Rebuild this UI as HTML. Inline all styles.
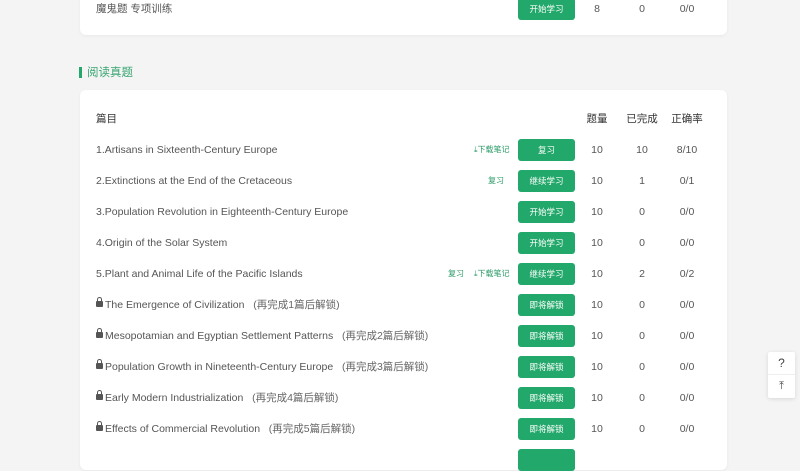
<!DOCTYPE html>
<html><head><meta charset="utf-8"><style>
*{margin:0;padding:0;box-sizing:border-box}
body{width:800px;height:450px;overflow:hidden;background:#f4f4f4;font-family:"Liberation Sans","Noto Sans CJK SC",sans-serif;color:#555;position:relative}
.card{position:absolute;left:80px;width:647px;background:#fff;border-radius:6px;box-shadow:0 1px 3px rgba(0,0,0,.05)}
.row{position:absolute;left:0;width:647px;height:22px;font-size:10.5px;line-height:22px}
.t{position:absolute;left:16px;color:#555}
.btn{position:absolute;left:438px;width:57px;height:22px;background:#22a86a;border-radius:3px;color:#fff;font-size:8.5px;text-align:center;line-height:22px}
.c{position:absolute;width:40px;text-align:center}
.c1{left:497px}.c2{left:542px}.c3{left:587px}
.lk{font-size:8px;color:#2a9a66;position:absolute}
.lock{display:inline-block;width:7px;height:6px;background:#555;border-radius:1px;position:relative;margin-right:2px;top:-1px}
.lock:before{content:"";position:absolute;left:1px;top:-4px;width:3px;height:4px;border:1px solid #555;border-bottom:none;border-radius:3px 3px 0 0}
.gray{color:#666}
</style></head><body>
<div class="card" style="top:-10px;height:45px">
 <div class="row" style="top:8px"><span class="t">魔鬼题 专项训练</span><span class="btn">开始学习</span><span class="c c1">8</span><span class="c c2">0</span><span class="c c3">0/0</span></div>
</div>
<div style="position:absolute;left:79px;top:67px;width:3px;height:11px;background:#22a86a"></div>
<div style="position:absolute;left:87px;top:64px;font-size:11.5px;color:#3aa673">阅读真题</div>
<div class="card" style="top:90px;height:380px">
 <div class="row" style="top:18px;color:#333"><span class="t" style="color:#333">篇目</span><span class="c c1">题量</span><span class="c c2">已完成</span><span class="c c3">正确率</span></div>
 <div class="row" style="top:49px"><span class="t">1.Artisans in Sixteenth-Century Europe</span><span class="lk" style="left:394px">⤓下载笔记</span><span class="btn">复习</span><span class="c c1">10</span><span class="c c2">10</span><span class="c c3">8/10</span></div>
 <div class="row" style="top:80px"><span class="t">2.Extinctions at the End of the Cretaceous</span><span class="lk" style="left:408px">复习</span><span class="btn">继续学习</span><span class="c c1">10</span><span class="c c2">1</span><span class="c c3">0/1</span></div>
 <div class="row" style="top:111px"><span class="t">3.Population Revolution in Eighteenth-Century Europe</span><span class="btn">开始学习</span><span class="c c1">10</span><span class="c c2">0</span><span class="c c3">0/0</span></div>
 <div class="row" style="top:142px"><span class="t">4.Origin of the Solar System</span><span class="btn">开始学习</span><span class="c c1">10</span><span class="c c2">0</span><span class="c c3">0/0</span></div>
 <div class="row" style="top:173px"><span class="t">5.Plant and Animal Life of the Pacific Islands</span><span class="lk" style="left:368px">复习</span><span class="lk" style="left:394px">⤓下载笔记</span><span class="btn">继续学习</span><span class="c c1">10</span><span class="c c2">2</span><span class="c c3">0/2</span></div>
 <div class="row" style="top:204px"><span class="t"><i class="lock"></i>The Emergence of Civilization &nbsp;&nbsp;<span class="gray">(再完成1篇后解锁)</span></span><span class="btn">即将解锁</span><span class="c c1">10</span><span class="c c2">0</span><span class="c c3">0/0</span></div>
 <div class="row" style="top:235px"><span class="t"><i class="lock"></i>Mesopotamian and Egyptian Settlement Patterns &nbsp;&nbsp;<span class="gray">(再完成2篇后解锁)</span></span><span class="btn">即将解锁</span><span class="c c1">10</span><span class="c c2">0</span><span class="c c3">0/0</span></div>
 <div class="row" style="top:266px"><span class="t"><i class="lock"></i>Population Growth in Nineteenth-Century Europe &nbsp;&nbsp;<span class="gray">(再完成3篇后解锁)</span></span><span class="btn">即将解锁</span><span class="c c1">10</span><span class="c c2">0</span><span class="c c3">0/0</span></div>
 <div class="row" style="top:297px"><span class="t"><i class="lock"></i>Early Modern Industrialization &nbsp;&nbsp;<span class="gray">(再完成4篇后解锁)</span></span><span class="btn">即将解锁</span><span class="c c1">10</span><span class="c c2">0</span><span class="c c3">0/0</span></div>
 <div class="row" style="top:328px"><span class="t"><i class="lock"></i>Effects of Commercial Revolution &nbsp;&nbsp;<span class="gray">(再完成5篇后解锁)</span></span><span class="btn">即将解锁</span><span class="c c1">10</span><span class="c c2">0</span><span class="c c3">0/0</span></div>
 <div class="row" style="top:359px"><span class="btn"></span></div>
</div>
<div style="position:absolute;left:768px;top:352px;width:27px;height:46px;background:#fff;box-shadow:0 1px 4px rgba(0,0,0,.12);border-radius:2px;text-align:center;font-size:12px;color:#444">
 <div style="height:23px;line-height:23px;border-bottom:1px solid #eee">?</div>
 <div style="height:22px;line-height:22px;font-size:11px">⤒</div>
</div>
</body></html>
